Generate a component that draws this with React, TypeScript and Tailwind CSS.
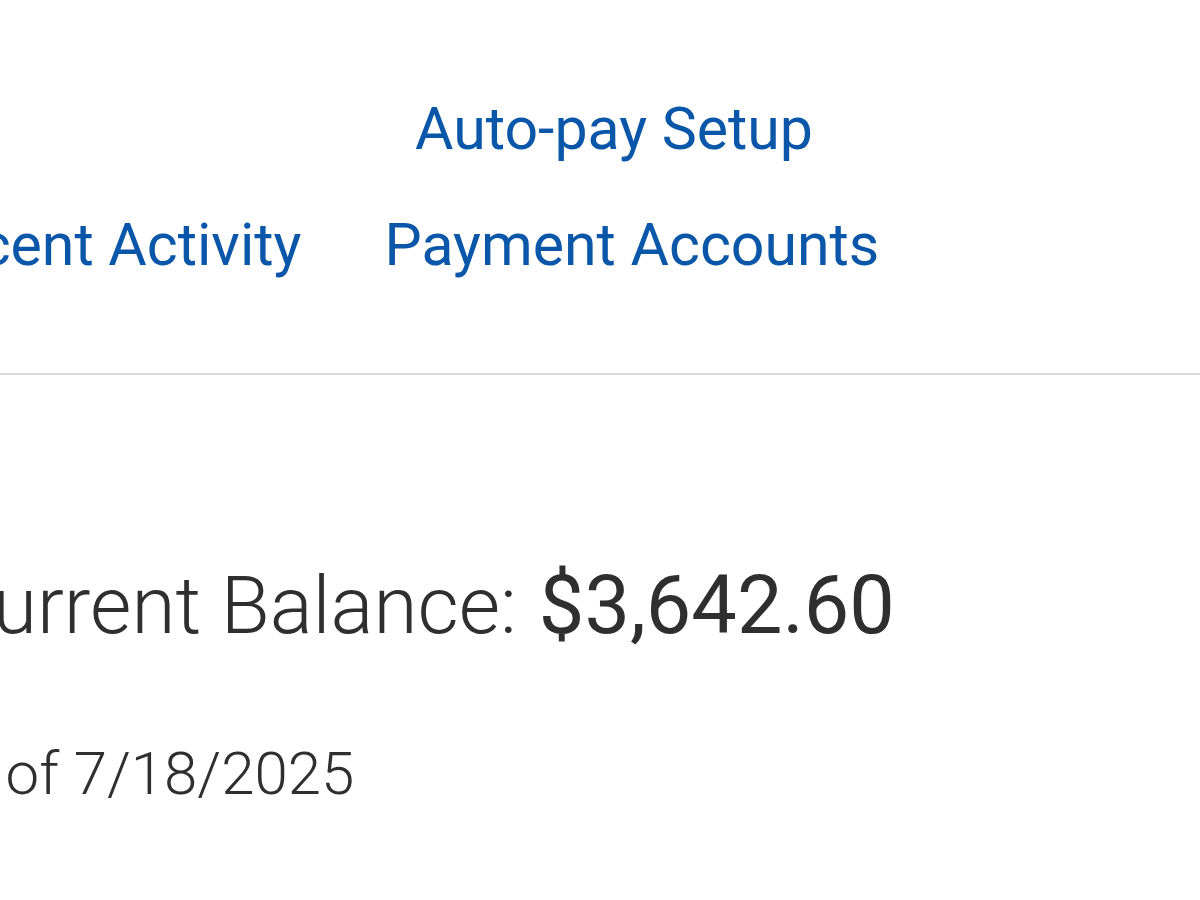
import React from "react";

export default function App() {
  return (
    <div
      className="w-[1200px] h-[900px] overflow-hidden bg-white"
      style={{ fontFamily: "Roboto, 'Liberation Sans', sans-serif" }}
    >
      <nav className="pt-[89px] flex flex-col text-[59px] leading-[80px] text-[#0a56a8]">
        <div className="flex pl-[415px]">
          <a className="whitespace-nowrap">Auto-pay Setup</a>
        </div>
        <div className="flex mt-[36px] ml-[-88px] gap-[83px] whitespace-nowrap">
          <a>Recent Activity</a>
          <a>Payment Accounts</a>
        </div>
      </nav>
      <div className="mt-[88px] h-[2px] bg-[#dcdcdc]" />
      <section className="pt-[186px] text-[#2f2f2f]">
        <div className="flex items-baseline ml-[-59px] whitespace-nowrap leading-[90px]">
          <span className="text-[80px] font-light">Current Balance:</span>
          <span className="text-[81px] ml-[22px]">$3,642.60</span>
        </div>
        <div className="mt-[88px] ml-[-77px] text-[60px] font-light leading-[70px] whitespace-nowrap">
          As of 7/18/2025
        </div>
      </section>
    </div>
  );
}
